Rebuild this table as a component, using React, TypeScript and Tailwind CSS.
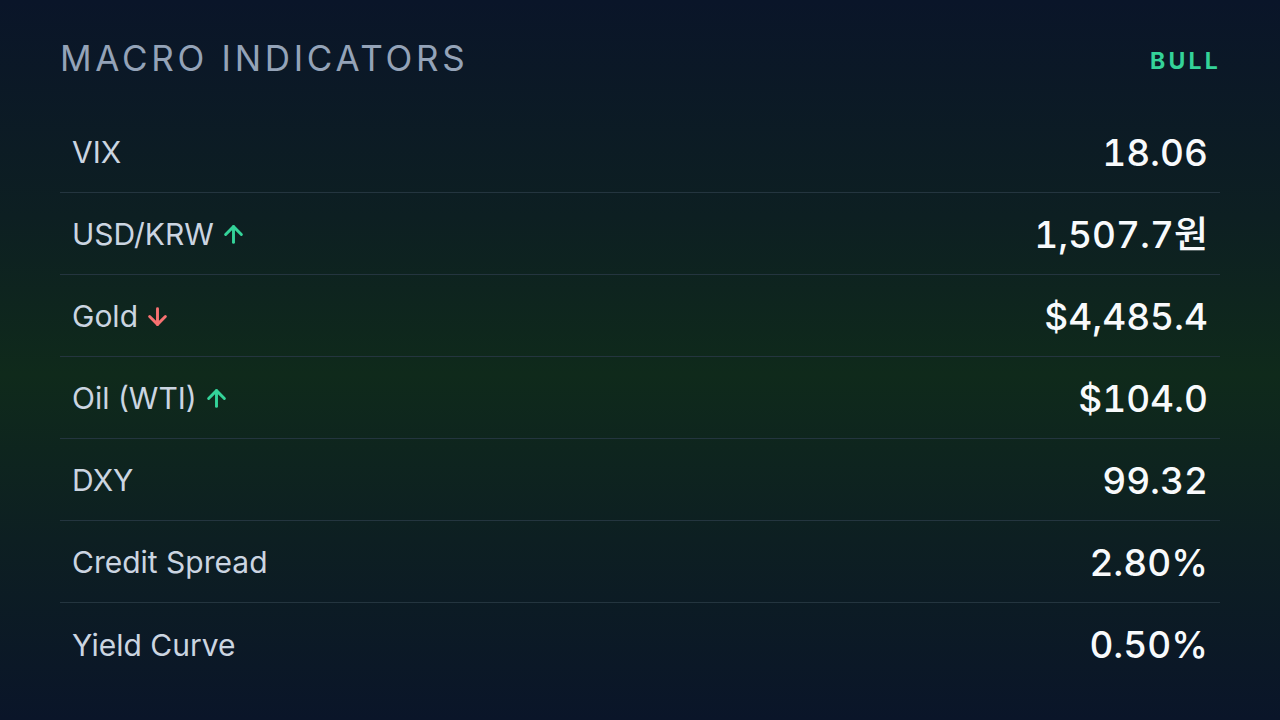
import { ArrowUp, ArrowDown } from "lucide-react";

type Row = {
  label: string;
  value: string;
  trend?: "up" | "down";
};

const rows: Row[] = [
  { label: "VIX", value: "18.06" },
  { label: "USD/KRW", value: "1,507.7원", trend: "up" },
  { label: "Gold", value: "$4,485.4", trend: "down" },
  { label: "Oil (WTI)", value: "$104.0", trend: "up" },
  { label: "DXY", value: "99.32" },
  { label: "Credit Spread", value: "2.80%" },
  { label: "Yield Curve", value: "0.50%" },
];

function TrendIcon({ trend }: { trend?: "up" | "down" }) {
  if (trend === "up") {
    return <ArrowUp className="w-[27px] h-[27px] text-[#34d399]" strokeWidth={2.6} />;
  }
  if (trend === "down") {
    return <ArrowDown className="w-[27px] h-[27px] text-[#f87171]" strokeWidth={2.6} />;
  }
  return null;
}

export default function App() {
  return (
    <div
      className="w-[1280px] h-[720px] px-[60px] pt-[34px] bg-[linear-gradient(180deg,#0a1529_0%,#0d1f22_30%,#0f2a1b_52%,#0d1f22_75%,#0a1529_100%)]"
      style={{ fontFamily: "Inter, 'Noto Sans CJK KR', sans-serif" }}
    >
      <div className="flex items-center justify-between h-[48px]">
        <h2 className="text-[35px] font-normal tracking-[0.106em] text-[#94a3b8] leading-none">
          MACRO INDICATORS
        </h2>
        <span className="text-[23px] font-bold tracking-[0.14em] text-[#34d399] -mr-[1px] mt-[6px]">
          BULL
        </span>
      </div>

      <div className="mt-[29px]">
        {rows.map((r, i) => (
          <div
            key={r.label}
            className={`flex items-center justify-between h-[82px] px-[12px] ${
              i < rows.length - 1 ? "border-b border-[#24353f]" : ""
            }`}
          >
            <div className="flex items-center gap-[6px] pt-[2px]">
              <span className="text-[30px] text-[#cbd5e1]">{r.label}</span>
              <TrendIcon trend={r.trend} />
            </div>
            <span className="text-[37px] font-medium tabular-nums text-[#f8fafc] pt-[2px]">
              {r.value}
            </span>
          </div>
        ))}
      </div>
    </div>
  );
}
